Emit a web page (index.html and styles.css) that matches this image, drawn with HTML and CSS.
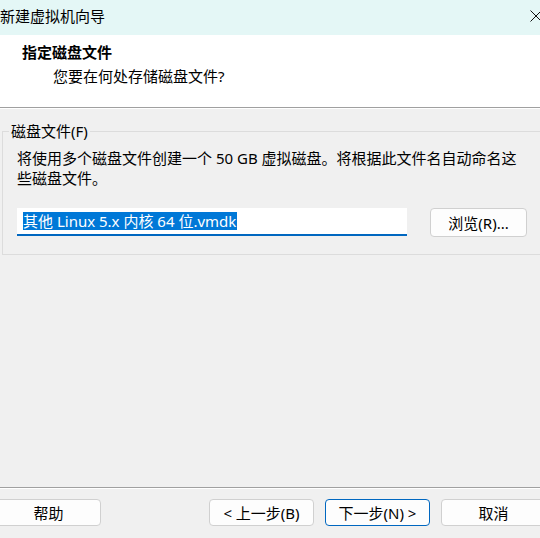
FILE: index.html
```html
<!DOCTYPE html>
<html lang="zh-CN">
    <head>
        <meta charset="UTF-8" />
        <meta name="viewport" content="width=device-width, initial-scale=1.0" />
        <title>新建虚拟机向导</title>
        <link rel="stylesheet" href="styles.css">
    </head>
    <body>
        <div class="window">
            <div class="titlebar">
                <span class="title">新建虚拟机向导</span>
                <svg class="close" width="12" height="12" viewBox="0 0 12 12">
                    <path d="M0.5 0.5 L11.5 11.5 M11.5 0.5 L0.5 11.5" stroke="#111" stroke-width="1" fill="none" />
                </svg>
            </div>

            <div class="header">
                <div class="header-title">指定磁盘文件</div>
                <div class="header-sub">您要在何处存储磁盘文件?</div>
            </div>

            <div class="content">
                <fieldset class="group">
                    <legend>磁盘文件(F)</legend>
                    <p class="desc">将使用多个磁盘文件创建一个 50 GB 虚拟磁盘。将根据此文件名自动命名这<br>些磁盘文件。</p>
                    <div class="file-row">
                        <div class="textbox">
                            <span class="selected">其他 Linux 5.x 内核 64 位.vmdk</span>
                        </div>
                        <button class="btn browse">浏览(R)...</button>
                    </div>
                </fieldset>
            </div>

            <div class="footer">
                <button class="btn help">帮助</button>
                <div class="spacer"></div>
                <button class="btn">&lt; 上一步(B)</button>
                <button class="btn primary">下一步(N) &gt;</button>
                <button class="btn cancel">取消</button>
            </div>
        </div>
    </body>
</html>
```

FILE: styles.css
```css
body {
    margin: 0;
    font-family: "Noto Sans", "Noto Sans CJK SC", sans-serif;
    font-size: 15px;
    color: #000;
    background-color: #f0f0f0;
    overflow: hidden;
}

.window {
    width: 540px;
    height: 538px;
    display: flex;
    flex-direction: column;
    overflow: hidden;
}

/* title bar */
.titlebar {
    height: 35px;
    flex-shrink: 0;
    background-color: #e4f7f6;
    display: flex;
    align-items: center;
    justify-content: space-between;
}

.title {
    line-height: 20px;
    margin-top: -3px;
}

.close {
    margin-right: -2px;
    margin-top: -3px;
}

/* white header strip */
.header {
    height: 72px;
    flex-shrink: 0;
    background-color: #fff;
    border-bottom: 1px solid #a0a0a0;
    box-shadow: 0 1px 0 #fff;
}

.header-title {
    font-weight: bold;
    line-height: 20px;
    margin: 7px 0 0 22px;
}

.header-sub {
    line-height: 20px;
    margin: 4px 0 0 53px;
}

/* main area */
.content {
    flex: 1;
    padding: 13px 0 0 2px;
}

.group {
    margin: 0 -8px 0 0;
    padding: 7px 0 17px 14px;
    border: 1px solid #dcdcdc;
}

.group legend {
    padding: 0 2px;
    margin-left: -8px;
    line-height: 20px;
}

.desc {
    margin: 0;
    line-height: 20px;
}

.file-row {
    display: flex;
    align-items: flex-start;
    margin-top: 20px;
}

.textbox {
    width: 384px;
    height: 26px;
    padding-left: 6px;
    background-color: #fff;
    border-bottom: 2px solid #0067c0;
    display: flex;
    align-items: center;
}

.selected {
    background-color: #0078d7;
    color: #fff;
    line-height: 18px;
    padding-right: 1px;
}

/* buttons */
.btn {
    font-family: inherit;
    font-size: 15px;
    height: 27px;
    width: 105px;
    padding: 0;
    background-color: #fdfdfd;
    border: 1px solid #d0d0d0;
    border-radius: 4px;
    color: #000;
    line-height: 20px;
}

.browse {
    width: 97px;
    height: 29px;
    margin-left: 23px;
}

.footer {
    height: 39px;
    flex-shrink: 0;
    border-top: 1px solid #a0a0a0;
    box-shadow: inset 0 1px 0 #fff;
    display: flex;
    align-items: flex-start;
    padding-top: 11px;
    gap: 11px;
}

.help {
    margin-left: -4px;
}

.spacer {
    flex: 1;
}

.primary {
    border-color: #0067c0;
}

.cancel {
    margin-right: -6px;
    flex-shrink: 0;
}
```
